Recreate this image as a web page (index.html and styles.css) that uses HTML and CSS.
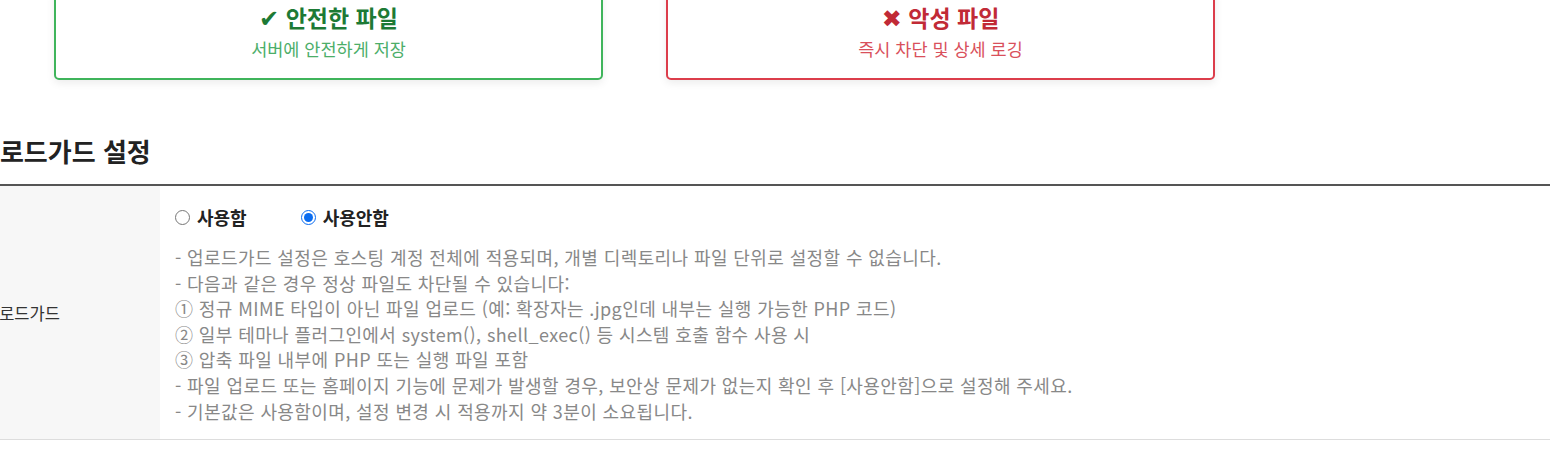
FILE: index.html
```html
<!DOCTYPE html>
<html lang="ko">
<head>
<meta charset="utf-8">
<title>업로드가드 설정</title>
<link rel="stylesheet" href="styles.css">
</head>
<body>
<div class="page">
  <div class="cards">
    <div class="card card-safe">
      <div class="card-title"><span class="mark">✔</span> 안전한 파일</div>
      <div class="card-sub">서버에 안전하게 저장</div>
    </div>
    <div class="card card-bad">
      <div class="card-title"><span class="mark">✖</span> 악성 파일</div>
      <div class="card-sub">즉시 차단 및 상세 로깅</div>
    </div>
  </div>

  <h2 class="section-title">업로드가드 설정</h2>

  <div class="setting-table">
    <div class="setting-row">
      <div class="setting-label">업로드가드</div>
      <div class="setting-value">
        <div class="radios">
          <label class="radio"><input type="radio" name="guard"> 사용함</label>
          <label class="radio"><input type="radio" name="guard" checked> 사용안함</label>
        </div>
        <div class="desc">
          <p>- 업로드가드 설정은 호스팅 계정 전체에 적용되며, 개별 디렉토리나 파일 단위로 설정할 수 없습니다.</p>
          <p>- 다음과 같은 경우 정상 파일도 차단될 수 있습니다:</p>
          <p>① 정규 MIME 타입이 아닌 파일 업로드 (예: 확장자는 .jpg인데 내부는 실행 가능한 PHP 코드)</p>
          <p>② 일부 테마나 플러그인에서 system(), shell_exec() 등 시스템 호출 함수 사용 시</p>
          <p>③ 압축 파일 내부에 PHP 또는 실행 파일 포함</p>
          <p>- 파일 업로드 또는 홈페이지 기능에 문제가 발생할 경우, 보안상 문제가 없는지 확인 후 [사용안함]으로 설정해 주세요.</p>
          <p>- 기본값은 사용함이며, 설정 변경 시 적용까지 약 3분이 소요됩니다.</p>
        </div>
      </div>
    </div>
  </div>
</div>
</body>
</html>
```

FILE: styles.css
```css
html, body {
  margin: 0;
  padding: 0;
  background: #ffffff;
  overflow: hidden;
}
body {
  font-family: "Noto Sans CJK KR", "Noto Sans", "Liberation Sans", sans-serif;
  color: #333;
}
.page {
  margin-left: -22px;
  margin-top: -13px;
  width: 1600px;
}
.cards {
  display: grid;
  grid-template-columns: 549px 549px;
  column-gap: 63px;
  margin-left: 76px;
}
.card {
  border: 2px solid #3fb45b;
  border-radius: 5px;
  padding: 13px 10px 17px;
  text-align: center;
  box-shadow: 0 3px 8px rgba(0,0,0,0.08);
  background: #fff;
}
.card-title {
  font-size: 23px;
  font-weight: 700;
  line-height: 30px;
}
.mark {
  font-family: "DejaVu Sans", sans-serif;
  font-size: 24px;
}
.card-sub {
  font-size: 17.5px;
  line-height: 24px;
  margin-top: 3px;
}
.card-safe { border-color: #3fb45b; }
.card-safe .card-title { color: #1d7a35; }
.card-safe .card-sub { color: #4cae69; }
.card-bad { border-color: #dc3d4b; }
.card-bad .card-title { color: #c12a36; }
.card-bad .card-sub { color: #d9505b; }

.section-title {
  font-size: 26px;
  font-weight: 700;
  color: #222;
  line-height: 34px;
  margin: 54px 0 16px -2px;
}
.setting-table {
  border-top: 2px solid #555;
  border-bottom: 1px solid #ddd;
}
.setting-row {
  display: flex;
}
.setting-label {
  width: 176px;
  padding-left: 6px;
  background: #f7f7f7;
  display: flex;
  align-items: center;
  font-size: 16.5px;
  color: #333;
}
.setting-value {
  flex: 1;
  padding: 19px 15px 15px;
}
.radios {
  display: flex;
  gap: 54px;
  line-height: 24px;
}
.radio {
  display: flex;
  align-items: center;
  gap: 7px;
  font-size: 18px;
  font-weight: 700;
  color: #222;
}
.radio input {
  margin: 0;
  width: 15px;
  height: 15px;
  accent-color: #0a6cf0;
}
.desc {
  margin-top: 16px;
  font-size: 18px;
  line-height: 25.6px;
  letter-spacing: 0.4px;
  color: #888;
}
.desc p {
  margin: 0;
  white-space: nowrap;
}
```
